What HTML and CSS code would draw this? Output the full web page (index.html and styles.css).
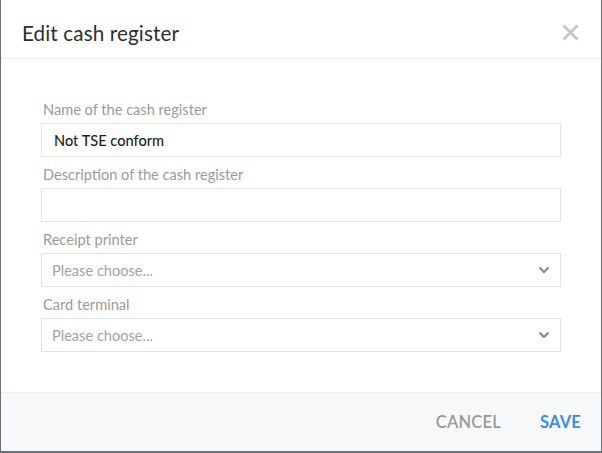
FILE: index.html
```html
<!DOCTYPE html>
<html lang="en">
<head>
<meta charset="utf-8">
<title>Edit cash register</title>
<link rel="stylesheet" href="styles.css">
</head>
<body>
<div class="modal">
  <div class="modal-header">
    <h1 class="modal-title">Edit cash register</h1>
    <button class="close" aria-label="Close">
      <svg width="17" height="17" viewBox="0 0 17 17"><path d="M1.5 1.5 L15.5 15.5 M15.5 1.5 L1.5 15.5" stroke="#c6c6c6" stroke-width="2.8" fill="none"/></svg>
    </button>
  </div>
  <div class="modal-body">
    <div class="field">
      <label class="label">Name of the cash register</label>
      <div class="input">Not TSE conform</div>
    </div>
    <div class="field">
      <label class="label">Description of the cash register</label>
      <div class="input"></div>
    </div>
    <div class="field">
      <label class="label">Receipt printer</label>
      <div class="input select"><span class="placeholder">Please choose...</span>
        <svg class="chev" width="12" height="8" viewBox="0 0 12 8"><path d="M1.5 1.5 L6 6 L10.5 1.5" stroke="#8a8a8a" stroke-width="2.2" fill="none"/></svg>
      </div>
    </div>
    <div class="field">
      <label class="label">Card terminal</label>
      <div class="input select"><span class="placeholder">Please choose...</span>
        <svg class="chev" width="12" height="8" viewBox="0 0 12 8"><path d="M1.5 1.5 L6 6 L10.5 1.5" stroke="#8a8a8a" stroke-width="2.2" fill="none"/></svg>
      </div>
    </div>
  </div>
  <div class="modal-footer">
    <button class="btn btn-cancel">CANCEL</button>
    <button class="btn btn-save">SAVE</button>
  </div>
</div>
</body>
</html>
```
FILE: styles.css
```css
html, body {
  margin: 0;
  padding: 0;
  background: #6d7079;
  height: 453px;
  overflow: hidden;
}
body {
  padding-left: 1px;
  font-family: "Lato", "Noto Sans", sans-serif;
}
.modal {
  width: 600px;
  height: 451px;
  background: #fff;
  display: flex;
  flex-direction: column;
}
.modal-header {
  height: 59px;
  box-sizing: border-box;
  border-bottom: 1px solid #ececec;
  display: flex;
  align-items: center;
  justify-content: space-between;
  padding: 7px 22px 0 21px;
}
.modal-title {
  margin: 0;
  font-size: 20.7px;
  font-weight: 400;
  color: #2b2f33;
  letter-spacing: 0.1px;
}
.close {
  background: none;
  border: 0;
  padding: 0;
  width: 17px;
  height: 17px;
  display: flex;
}
.modal-body {
  padding: 41px 40px 40px;
  display: flex;
  flex-direction: column;
  gap: 8px;
}
.field {
  display: flex;
  flex-direction: column;
  gap: 3px;
}
.label {
  font-size: 14.6px;
  line-height: 20px;
  color: #9b9b9b;
  padding-left: 2px;
}
.input {
  height: 32px;
  border: 1px solid #e3e3e3;
  display: flex;
  align-items: center;
  padding: 0 12px;
  font-size: 14.6px;
  color: #1e1e1e;
  font-weight: 500;
}
.select {
  justify-content: space-between;
  padding-left: 10px;
  font-weight: 400;
}
.placeholder {
  color: #a3a3a3;
}
.chev {
  margin-right: -2px;
}
.modal-footer {
  flex: 1;
  background: #f7f8fa;
  border-top: 1px solid #eeeff1;
  display: flex;
  justify-content: flex-end;
  align-items: center;
  gap: 39px;
  padding: 0 20px 0 0;
}
.btn {
  background: none;
  border: 0;
  padding: 0;
  font-family: inherit;
  font-size: 16.5px;
  font-weight: 700;
  letter-spacing: 0.2px;
}
.btn-cancel {
  color: #9a9a9a;
  font-weight: 600;
}
.btn-save {
  color: #3d8fdc;
}
```
